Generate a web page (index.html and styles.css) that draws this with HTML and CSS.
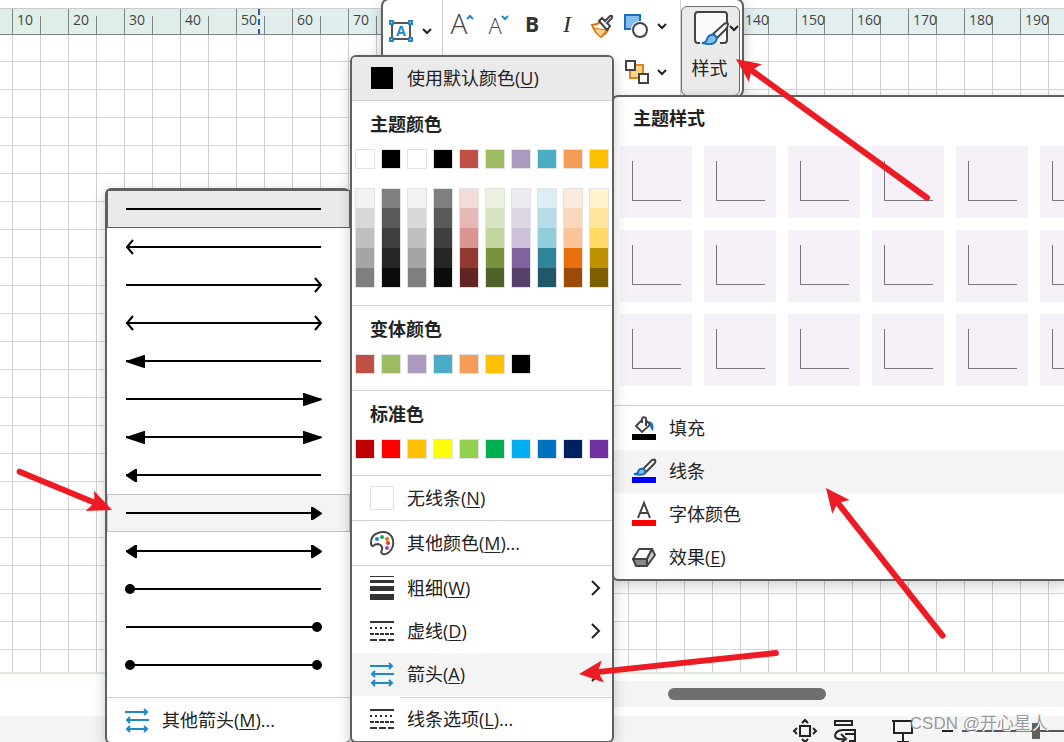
FILE: index.html
```html
<!DOCTYPE html>
<html lang="zh-CN">
<head>
<meta charset="utf-8">
<meta name="viewport" content="width=device-width, initial-scale=1">
<title>形状样式</title>
<link rel="stylesheet" href="styles.css">
</head>
<body>
<svg class="defs" aria-hidden="true">
  <defs>
    <path id="head-open" d="M8 12L2 19l6 7" fill="none" stroke="#000" stroke-width="2"/>
    <path id="head-long" d="M1 19v1l18 6h1V13h-1z" fill="#000"/>
    <path id="head-short" d="M1 19v1l9 6h2V13h-2z" fill="#000"/>
    <circle id="head-dot" cx="5" cy="19" r="5" fill="#000"/>
    <g id="icon-arrows" fill="none" stroke="#1e88c8" stroke-width="2">
      <path d="M0 4h22M19 1l3 3-3 3M24 12H2M5 9l-3 3 3 3M2 21h20M5 18l-3 3 3 3M19 18l3 3-3 3"/>
    </g>
    <g id="icon-dashes" fill="none" stroke="#333" stroke-width="2">
      <path d="M0 3h24"/>
      <path d="M0 9h24" stroke-dasharray="2 3"/>
      <path d="M0 15h24" stroke-dasharray="4 1"/>
      <path d="M0 21h24" stroke-dasharray="7 2"/>
    </g>
    <g id="icon-brush">
      <path d="M10 11L20 1q3-1 3 0 1 2-1 4L13 14z" fill="#fff" stroke="#444" stroke-width="2"/>
      <path d="M2 15q4 0 4-2 1-4 5-3 3 1 2 4-2 3-11 1z" fill="#83beec" stroke="#1b6fb8" stroke-width="2"/>
    </g>
    <path id="chevron-down" d="M1 1l4 4 4-4" fill="none" stroke="#222" stroke-width="2"/>
  </defs>
</svg>

<div class="app">
  <div class="strip"></div>
  <div class="ruler">
    <span>10</span><span>20</span><span>30</span><span>40</span><span>50</span><span>60</span><span>70</span><span></span><span></span><span></span><span></span><span></span><span></span><span>140</span><span>150</span><span>160</span><span>170</span><span>180</span><span>190</span>
    <i class="ruler-mark"></i>
  </div>
  <div class="canvas"></div>
  <div class="scroll-row"><div class="tabs"></div><div class="scrollbar"><div class="thumb"></div></div></div>
  <div class="status">
    <button type="button" aria-label="适应窗口"><svg width="24" height="24" fill="none" stroke="#222" stroke-width="2"><path d="M7 7h10v10H7zM9 4l3-3 3 3M9 20l3 3 3-3M4 9l-3 3 3 3M20 9l3 3-3 3"/></svg></button>
    <button type="button" aria-label="切换窗口"><svg width="24" height="24" fill="none" stroke="#222" stroke-width="2"><path d="M2 7V2h17v5M2 6h18M9 11h13v11h-6M12 15h10M9 11q-7 1-7 6 1 4 9 3M8 15l5 5-5 4"/></svg></button>
    <button type="button" aria-label="演示" class="present"><svg width="24" height="24" fill="none" stroke="#222" stroke-width="2"><path d="M1 2h22M3 2v12h18V2M12 14v10M6 23h12"/></svg></button>
    <button type="button" aria-label="缩小" class="minus"><svg width="12" height="12"><path d="M0 6h11" stroke="#222" stroke-width="2"/></svg></button>
    <input type="range" class="zoom" aria-label="缩放" value="50">
  </div>

  <section class="toolbar" aria-label="浮动工具栏">
    <div class="tool-group tool-textbox">
      <button type="button" aria-label="文本框"><svg width="24" height="22"><path d="M3 3h18v16H3z" fill="#fff" stroke="#555" stroke-width="2"/><g fill="#fff" stroke="#1e88c8" stroke-width="2"><path d="M1 1h3v3H1zM20 1h3v3h-3zM1 18h3v3H1zM20 18h3v3h-3z"/></g><text x="12" y="16" class="glyph-box">A</text></svg></button>
      <button type="button" aria-label="文本框选项"><svg width="10" height="7"><use href="#chevron-down"/></svg></button>
    </div>
    <div class="tool-group tool-main">
      <div class="tool-row">
        <button type="button" aria-label="增大字号"><svg width="24" height="26"><text x="9" y="21" class="glyph-lg">A</text><path d="M17 6l3-3 3 3" fill="none" stroke="#1e88c8" stroke-width="2"/></svg></button>
        <button type="button" aria-label="减小字号"><svg width="24" height="26"><text x="10" y="21" class="glyph-md">A</text><path d="M17 3l3 3 3-3" fill="none" stroke="#1e88c8" stroke-width="2"/></svg></button>
        <button type="button" class="bold">B</button>
        <button type="button" class="italic">I</button>
        <button type="button" aria-label="格式刷"><svg width="24" height="24"><path d="M2 11q5 0 8-3l8 8q-2 4-7 7-6-4-9-12z" fill="#fff" stroke="#e0740c" stroke-width="2"/><path d="M4 14l12 2-5 7q-5-3-7-9z" fill="#fbd48c" stroke="#e0740c"/><path d="M9 7l3-3 3 3 5-5q3-1 2 2l-5 5 3 3-3 4z" fill="#fff" stroke="#444" stroke-width="2"/></svg></button>
        <button type="button" aria-label="更改形状"><svg width="26" height="26"><path d="M1 2h15v14H1z" fill="#83beec" stroke="#1b6fb8" stroke-width="2"/><circle cx="16" cy="17" r="9" fill="#fff"/><circle cx="16" cy="17" r="7" fill="#fff" stroke="#444" stroke-width="2"/></svg></button>
        <button type="button" class="drop" aria-label="形状选项"><svg width="10" height="7"><use href="#chevron-down"/></svg></button>
      </div>
      <div class="tool-row tool-row-end">
        <button type="button" aria-label="排列"><svg width="26" height="26"><path d="M6 6h13v13H6z" fill="#fbd48c" stroke="#e0861c" stroke-width="2"/><path d="M2 2h9v9H2zM15 15h9v9h-9z" fill="#fff" stroke="#444" stroke-width="2"/></svg></button>
        <button type="button" class="drop" aria-label="排列选项"><svg width="10" height="7"><use href="#chevron-down"/></svg></button>
      </div>
    </div>
    <button type="button" class="style-button">
      <svg width="46" height="38"><path d="M5 34q-3 0-3-3V6q0-3 3-3h26q3 0 3 3v25q0 3-3 3z" fill="#fafafa" stroke="#444" stroke-width="2"/><path d="M7 34h20" stroke="#eaeaea" stroke-width="3"/><path d="M19 26L31 15q4-2 4 0 0 3-3 6l-9 9z" fill="#fff" stroke="#444" stroke-width="2"/><path d="M9 34q4 0 5-4 2-5 7-4 4 2 2 6-3 5-14 2z" fill="#83beec" stroke="#1b6fb8" stroke-width="2"/><path d="M37 17l4 4 4-4" fill="none" stroke="#222" stroke-width="2"/></svg>
      <span>样式</span>
    </button>
  </section>

  <section class="panel style-panel">
    <h2>主题样式</h2>
    <div class="tiles">
      <button type="button" class="tile" aria-label="样式 1"></button><button type="button" class="tile" aria-label="样式 2"></button><button type="button" class="tile" aria-label="样式 3"></button><button type="button" class="tile" aria-label="样式 4"></button><button type="button" class="tile" aria-label="样式 5"></button><button type="button" class="tile" aria-label="样式 6"></button>
      <button type="button" class="tile" aria-label="样式 7"></button><button type="button" class="tile" aria-label="样式 8"></button><button type="button" class="tile" aria-label="样式 9"></button><button type="button" class="tile" aria-label="样式 10"></button><button type="button" class="tile" aria-label="样式 11"></button><button type="button" class="tile" aria-label="样式 12"></button>
      <button type="button" class="tile" aria-label="样式 13"></button><button type="button" class="tile" aria-label="样式 14"></button><button type="button" class="tile" aria-label="样式 15"></button><button type="button" class="tile" aria-label="样式 16"></button><button type="button" class="tile" aria-label="样式 17"></button><button type="button" class="tile" aria-label="样式 18"></button>
    </div>
    <div class="style-items">
      <button type="button" class="item"><svg width="24" height="24"><path d="M10 4L4 10l6 6 8-7-4-5" fill="#fff" stroke="#444" stroke-width="2"/><path d="M10 7V3q1-3 4-1v8" fill="none" stroke="#444" stroke-width="2"/><path d="M16 5q7 0 5 10-3-2-3-7z" fill="#1b6fb8"/><path d="M0 18h24v6H0z"/></svg><span>填充</span></button>
      <button type="button" class="item hover"><svg width="24" height="24"><use href="#icon-brush"/><path d="M0 18h24v6H0z" fill="#00f"/></svg><span>线条</span></button>
      <button type="button" class="item"><svg width="24" height="24"><path d="M6 16l6-15 6 15M8 11h8" fill="none" stroke="#444" stroke-width="2"/><path d="M0 18h24v6H0z" fill="#f00"/></svg><span>字体颜色</span></button>
      <button type="button" class="item"><svg width="24" height="24" stroke="#444" stroke-width="2" stroke-linejoin="round"><path d="M1 14L7 4h13l-5 10z" fill="#fff"/><path d="M1 14h14v7H4z" fill="#888"/><path d="M20 4l3 6-8 11v-7z" fill="#ccc"/></svg><span>效果(<u>E</u>)</span></button>
    </div>
  </section>

  <section class="panel arrow-menu">
    <button type="button" class="arrow-row selected" aria-label="无箭头"><svg width="198" height="38"><path d="M1 19h195"/></svg></button>
    <button type="button" class="arrow-row" aria-label="箭头 1"><svg width="198" height="38"><path d="M1 19h195"/><use href="#head-open"/></svg></button>
    <button type="button" class="arrow-row" aria-label="箭头 2"><svg width="198" height="38"><path d="M1 19h195"/><use href="#head-open" transform="translate(198) scale(-1 1)"/></svg></button>
    <button type="button" class="arrow-row" aria-label="箭头 3"><svg width="198" height="38"><path d="M1 19h195"/><use href="#head-open"/><use href="#head-open" transform="translate(198) scale(-1 1)"/></svg></button>
    <button type="button" class="arrow-row" aria-label="箭头 4"><svg width="198" height="38"><path d="M1 19h195"/><use href="#head-long"/></svg></button>
    <button type="button" class="arrow-row" aria-label="箭头 5"><svg width="198" height="38"><path d="M1 19h195"/><use href="#head-long" transform="translate(198) scale(-1 1)"/></svg></button>
    <button type="button" class="arrow-row" aria-label="箭头 6"><svg width="198" height="38"><path d="M1 19h195"/><use href="#head-long"/><use href="#head-long" transform="translate(198) scale(-1 1)"/></svg></button>
    <button type="button" class="arrow-row" aria-label="箭头 7"><svg width="198" height="38"><path d="M1 19h195"/><use href="#head-short"/></svg></button>
    <button type="button" class="arrow-row hover" aria-label="箭头 8"><svg width="198" height="38"><path d="M1 19h195"/><use href="#head-short" transform="translate(198) scale(-1 1)"/></svg></button>
    <button type="button" class="arrow-row" aria-label="箭头 9"><svg width="198" height="38"><path d="M1 19h195"/><use href="#head-short"/><use href="#head-short" transform="translate(198) scale(-1 1)"/></svg></button>
    <button type="button" class="arrow-row" aria-label="箭头 10"><svg width="198" height="38"><path d="M1 19h195"/><use href="#head-dot"/></svg></button>
    <button type="button" class="arrow-row" aria-label="箭头 11"><svg width="198" height="38"><path d="M1 19h195"/><use href="#head-dot" transform="translate(197) scale(-1 1)"/></svg></button>
    <button type="button" class="arrow-row" aria-label="箭头 12"><svg width="198" height="38"><path d="M1 19h195"/><use href="#head-dot"/><use href="#head-dot" transform="translate(197) scale(-1 1)"/></svg></button>
    <div class="more-arrows">
      <button type="button" class="item"><svg width="24" height="24"><use href="#icon-arrows"/></svg><span>其他箭头(<u>M</u>)...</span></button>
    </div>
  </section>

  <section class="panel palette">
    <button type="button" class="item default-color"><span class="chip chip-black"></span><span>使用默认颜色(<u>U</u>)</span></button>
    <div class="colors theme">
      <h2>主题颜色</h2>
      <div class="swatches">
        <button type="button" style="background:#fff" aria-label="白色"></button><button type="button" style="background:#000" aria-label="黑色"></button><button type="button" style="background:#fff" aria-label="白色"></button><button type="button" style="background:#000" aria-label="黑色"></button><button type="button" style="background:#c05046" aria-label="红"></button><button type="button" style="background:#9dbb61" aria-label="绿"></button><button type="button" style="background:#ab9ac0" aria-label="紫"></button><button type="button" style="background:#4bacc6" aria-label="青"></button><button type="button" style="background:#f59d56" aria-label="橙"></button><button type="button" style="background:#ffc000" aria-label="金"></button>
      </div>
      <div class="swatches ramps">
        <div class="ramp" style="--a:#f2f2f2;--b:#d8d8d8;--c:#bfbfbf;--d:#a5a5a5;--e:#7f7f7f"></div>
        <div class="ramp" style="--a:#7f7f7f;--b:#595959;--c:#3f3f3f;--d:#262626;--e:#0c0c0c"></div>
        <div class="ramp" style="--a:#f2f2f2;--b:#d8d8d8;--c:#bfbfbf;--d:#a5a5a5;--e:#7f7f7f"></div>
        <div class="ramp" style="--a:#7f7f7f;--b:#595959;--c:#3f3f3f;--d:#262626;--e:#0c0c0c"></div>
        <div class="ramp" style="--a:#f2dcda;--b:#e5b8b5;--c:#d99590;--d:#923931;--e:#612621"></div>
        <div class="ramp" style="--a:#ebf1df;--b:#d8e4bf;--c:#c4d6a0;--d:#78933f;--e:#4f622a"></div>
        <div class="ramp" style="--a:#eeeaf2;--b:#ddd6e5;--c:#ccc1d9;--d:#7f639f;--e:#554169"></div>
        <div class="ramp" style="--a:#dbeef3;--b:#b7dde8;--c:#93cddc;--d:#31859b;--e:#205867"></div>
        <div class="ramp" style="--a:#fdebdd;--b:#fbd7bb;--c:#f9c499;--d:#e96f0c;--e:#9b4a08"></div>
        <div class="ramp" style="--a:#fff2cc;--b:#ffe599;--c:#ffd966;--d:#bf9000;--e:#7f6000"></div>
      </div>
    </div>
    <div class="colors">
      <h2>变体颜色</h2>
      <div class="swatches">
        <button type="button" style="background:#c05046" aria-label="红"></button><button type="button" style="background:#9dbb61" aria-label="绿"></button><button type="button" style="background:#ab9ac0" aria-label="紫"></button><button type="button" style="background:#4bacc6" aria-label="青"></button><button type="button" style="background:#f59d56" aria-label="橙"></button><button type="button" style="background:#ffc000" aria-label="金"></button><button type="button" style="background:#000" aria-label="黑"></button>
      </div>
    </div>
    <div class="colors">
      <h2>标准色</h2>
      <div class="swatches">
        <button type="button" style="background:#c00000" aria-label="深红"></button><button type="button" style="background:#f00" aria-label="红"></button><button type="button" style="background:#ffc000" aria-label="金"></button><button type="button" style="background:#ff0" aria-label="黄"></button><button type="button" style="background:#92d050" aria-label="浅绿"></button><button type="button" style="background:#00b050" aria-label="绿"></button><button type="button" style="background:#00b0f0" aria-label="浅蓝"></button><button type="button" style="background:#0070c0" aria-label="蓝"></button><button type="button" style="background:#002060" aria-label="深蓝"></button><button type="button" style="background:#7030a0" aria-label="紫"></button>
      </div>
    </div>
    <button type="button" class="item ruled"><span class="chip"></span><span>无线条(<u>N</u>)</span></button>
    <button type="button" class="item ruled"><svg width="24" height="24"><path d="M1 12Q1 4 8 2q9-3 14 4 3 7-1 13-4 5-8 4-3-1-1-4 1-5-4-6-3 0-5 2-2 0-2-3z" fill="#fff" stroke="#444" stroke-width="2"/><circle cx="7" cy="8" r="2" fill="#1e88c8"/><circle cx="12" cy="6" r="2" fill="#2e9d57"/><circle cx="17" cy="8" r="2" fill="#e0740c"/><circle cx="18" cy="12" r="2" fill="#e33"/><circle cx="17" cy="17" r="2" fill="#a23fb5"/></svg><span>其他颜色(<u>M</u>)...</span></button>
    <div class="line-items">
      <button type="button" class="item"><svg width="24" height="24"><path d="M0 0h24v1H0zM0 4h24v3H0zM0 10h24v5H0zM0 18h24v6H0z" fill="#333"/></svg><span>粗细(<u>W</u>)</span><svg class="go" width="10" height="16"><path d="M1 1l7 7-7 7"/></svg></button>
      <button type="button" class="item"><svg width="24" height="24"><use href="#icon-dashes"/></svg><span>虚线(<u>D</u>)</span><svg class="go" width="10" height="16"><path d="M1 1l7 7-7 7"/></svg></button>
      <button type="button" class="item hover"><svg width="24" height="24"><use href="#icon-arrows"/></svg><span>箭头(<u>A</u>)</span><svg class="go" width="10" height="16"><path d="M1 1l7 7-7 7"/></svg></button>
    </div>
    <hr>
    <button type="button" class="item"><svg width="24" height="24"><use href="#icon-dashes"/></svg><span>线条选项(<u>L</u>)...</span></button>
  </section>

  <svg class="pointers" width="1064" height="742" aria-hidden="true" stroke="#ed1c24" stroke-width="6" stroke-linecap="round" fill="#ed1c24">
    <g transform="translate(736 59) rotate(36)"><path d="M20 0H236"/><path stroke="none" d="M0 0l24-11-5 11 5 11z"/></g>
    <g transform="translate(826 488) rotate(51.7)"><path d="M20 0H188"/><path stroke="none" d="M0 0l24-11-5 11 5 11z"/></g>
    <g transform="translate(579 674) rotate(-6.1)"><path d="M20 0H198"/><path stroke="none" d="M0 0l24-11-5 11 5 11z"/></g>
    <g transform="translate(112 510) rotate(202.5)"><path d="M20 0H100"/><path stroke="none" d="M0 0l24-11-5 11 5 11z"/></g>
  </svg>
  <div class="watermark">CSDN @开心星人</div>
</div>
</body>
</html>
```
FILE: styles.css
```css
* { box-sizing: border-box; }

body {
  margin: 0;
  font-family: "Open Sans", "Noto Sans CJK SC", sans-serif;
  font-size: 18px;
  color: #222;
}

button {
  margin: 0;
  padding: 0;
  border: 0;
  background: none;
  font: inherit;
  color: inherit;
}

svg { display: block; flex: none; overflow: visible; }
.defs { position: absolute; width: 0; height: 0; }

.app {
  position: relative;
  display: flex;
  flex-direction: column;
  height: 100vh;
  overflow: hidden;
  background: #fff;
}

/* Ruler and page grid */
.strip { height: 8px; flex: none; }

.ruler {
  position: relative;
  display: flex;
  flex: none;
  height: 27px;
  padding-left: 12px;
  overflow: hidden;
  border-top: 1px solid #c8cccb;
  border-bottom: 1px solid #7d8483;
  background: linear-gradient(90deg, #e0efe8, #e2eef0 40%);
  font-size: 14px;
  color: #444;
}

.ruler span {
  flex: none;
  width: 56px;
  padding-left: 4px;
  border-left: 1px solid #7d8483;
  line-height: 22px;
  background: linear-gradient(#7d8483, #7d8483) 27px 7px / 1px 20px no-repeat;
}

.ruler-mark {
  position: absolute;
  top: 0;
  left: 258px;
  height: 26px;
  border-left: 2px dashed #3455b0;
}

.canvas {
  flex: 1;
  border-bottom: 2px solid #dfeae0;
  background:
    repeating-linear-gradient(90deg, #d0d0d0 0 1px, transparent 1px 28px) 12px 0,
    repeating-linear-gradient(transparent 0 26px, #d6d6d6 26px 27px, transparent 27px 28px),
    #fff;
}

.scroll-row { display: flex; flex: none; height: 42px; padding: 7px 0 9px; }
.tabs { width: 360px; flex: none; }
.scrollbar { flex: 1; padding: 7px 0 0 308px; background: #f4f4f4; }
.thumb { width: 158px; height: 12px; border-radius: 6px; background: #6f6f6f; }

.status {
  display: flex;
  flex: none;
  align-items: center;
  justify-content: flex-end;
  gap: 16px;
  height: 26px;
  padding-top: 4px;
  background: #f4f4f4;
}
.status button { flex: none; }
.status .present { margin-left: 18px; }
.status .minus { margin-left: 11px; }

.zoom {
  appearance: none;
  flex: none;
  width: 148px;
  height: 16px;
  margin: 0 -46px 0 -8px;
  background: linear-gradient(#555, #555) 0 7px / 100% 2px no-repeat;
}
.zoom::-webkit-slider-thumb { appearance: none; width: 8px; height: 16px; background: #5f5f5f; }

/* Floating toolbar */
.toolbar {
  position: absolute;
  top: -2px;
  left: 381px;
  display: flex;
  width: 363px;
  height: 100px;
  border: 2px solid #606060;
  border-radius: 8px;
  background: #fff;
  box-shadow: 0 4px 14px rgba(0, 0, 0, .2);
}

.tool-group { border-right: 1px solid #d0d0d0; }
.tool-textbox { display: flex; align-items: center; gap: 9px; width: 60px; height: 56px; padding: 6px 0 0 6px; }
.tool-main { width: 238px; padding: 12px 0 0 7px; }
.tool-row { display: flex; align-items: center; gap: 11px; height: 28px; }
.tool-row button { display: flex; justify-content: center; width: 24px; flex: none; }
.tool-row .drop { width: 10px; margin-left: -3px; }
.tool-row-end { justify-content: flex-end; margin-top: 18px; padding-right: 13px; }

.tool-row .bold, .tool-row .italic { height: 28px; line-height: 24px; color: #333; }
.bold { font-size: 21px; font-weight: 700; }
.italic { font-family: "Liberation Serif", serif; font-size: 24px; font-style: italic; }

.glyph-box { font-size: 14px; font-weight: 700; fill: #1e88c8; text-anchor: middle; }
.glyph-lg, .glyph-md { fill: #444; font-weight: 300; text-anchor: middle; }
.glyph-lg { font-size: 28px; }
.glyph-md { font-size: 22px; }

.style-button {
  display: flex;
  flex-direction: column;
  align-items: center;
  width: 59px;
  height: 90px;
  margin-top: 6px;
  padding: 2px 0 0;
  border: 1px solid #707070;
  border-radius: 6px;
  background: #eaeaea;
}
.style-button svg { align-self: flex-end; }
.style-button span { margin-top: 7px; padding-right: 2px; line-height: 28px; }

/* Shared menu parts */
.panel {
  position: absolute;
  border: 2px solid #606060;
  border-radius: 6px;
  background: #fff;
  box-shadow: 0 4px 14px rgba(0, 0, 0, .2);
}

h2 { margin: 0; font-size: 18px; line-height: 24px; font-weight: 700; }

.item {
  display: flex;
  align-items: center;
  gap: 13px;
  width: 100%;
  height: 43px;
  padding: 0 11px 2px 18px;
  text-align: left;
  white-space: nowrap;
}
.item span + span, .item svg + span { padding-bottom: 2px; }
.item u { text-underline-offset: 2px; text-decoration-thickness: 1px; }
.item.hover { background: #f4f4f4; }

/* Style gallery */
.style-panel { top: 95px; left: 612px; right: -8px; overflow: hidden; }
.style-panel h2 { padding: 9px 0 16px 19px; }
.tiles {
  display: grid;
  grid-template-columns: repeat(6, 72px);
  gap: 12px;
  padding: 0 0 19px 6px;
}
.tile {
  height: 72px;
  background:
    linear-gradient(#777, #777) 12px 15px / 1px 40px no-repeat,
    linear-gradient(#777, #777) 12px 54px / 49px 1px no-repeat,
    #f6f1f8;
}
.style-items { padding-top: 1px; border-top: 1px solid #d0d0d0; }

/* Arrow list */
.arrow-menu { top: 188px; left: 105px; width: 245px; border-right: 0; }
.arrow-row {
  display: flex;
  align-items: center;
  width: 100%;
  height: 38px;
  padding-left: 17px;
  border: 1px solid transparent;
}
.arrow-row path { stroke: #000; stroke-width: 2; }
.arrow-row.selected { border-color: #606060; background: #eaeaea; }
.arrow-row.hover { border-color: #c2c2c2; background: #f4f4f4; }
.more-arrows { margin-top: 13px; padding-top: 1px; border-top: 1px solid #d0d0d0; }

/* Color palette */
.palette { top: 55px; left: 350px; width: 264px; overflow: hidden; }
.default-color { height: 44px; border-bottom: 1px solid #d0d0d0; background: #eaeaea; }
.chip { width: 24px; height: 24px; flex: none; border: 1px solid #e2e2e6; background: #fff; }
.chip-black { border-color: #eaeaea; background: #000; }
.colors { padding: 11px 3px 16px; border-bottom: 1px solid #d0d0d0; }
.colors h2 { padding-left: 15px; margin-bottom: 13px; }
.theme { padding-bottom: 17px; }
.swatches { display: flex; gap: 6px; }
.swatches button, .ramp { width: 20px; height: 20px; flex: none; border: 1px solid #e2e2e6; }
.ramps { margin-top: 19px; }
.ramp {
  height: 100px;
  background: linear-gradient(var(--a) 19px, var(--b) 19px 39px, var(--c) 39px 59px, var(--d) 59px 79px, var(--e) 79px);
}
.ruled { height: 45px; padding-bottom: 0; border-bottom: 1px solid #d0d0d0; }
.line-items { padding: 1px 0; }
.go { margin-left: auto; fill: none; stroke: #222; stroke-width: 2; }
hr { margin: 0 0 0 48px; border: 0; border-top: 1px solid #d0d0d0; }

/* Annotations over the page */
.pointers { position: absolute; top: 0; left: 0; pointer-events: none; }
.watermark {
  position: absolute;
  right: 16px;
  bottom: 6px;
  font-family: "Liberation Sans", "Noto Sans CJK SC", sans-serif;
  font-size: 17px;
  line-height: 24px;
  color: rgba(110, 110, 110, .7);
  text-shadow: 1px 1px 0 #fff;
}
```
